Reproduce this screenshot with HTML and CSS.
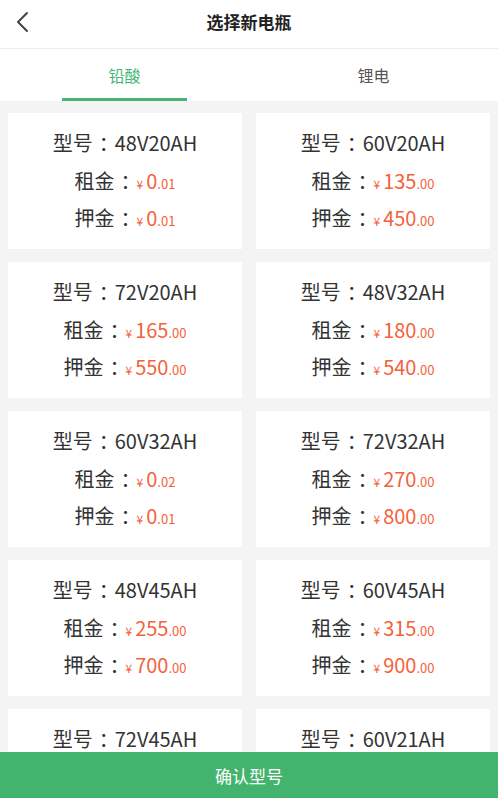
FILE: index.html
```html
<!DOCTYPE html>
<html lang="zh">
<head>
<meta charset="utf-8">
<title>选择新电瓶</title>
<link rel="stylesheet" href="styles.css">
</head>
<body>
<div class="page">
  <header class="topbar">
    <span class="back">
      <svg width="14" height="22" viewBox="0 0 14 22"><path d="M12 2 L3 11 L12 20" fill="none" stroke="#444" stroke-width="2" stroke-linecap="round" stroke-linejoin="round"/></svg>
    </span>
    <h1 class="title">选择新电瓶</h1>
  </header>
  <nav class="tabs">
    <div class="tab active"><span>铅酸</span></div>
    <div class="tab"><span>锂电</span></div>
  </nav>
  <main class="list">
    <div class="grid">
      <div class="card"><p>型号<b>：</b>48V20AH</p><p>租金<b>：</b><span class="price"><i>¥</i>0<em>.01</em></span></p><p>押金<b>：</b><span class="price"><i>¥</i>0<em>.01</em></span></p></div>
      <div class="card"><p>型号<b>：</b>60V20AH</p><p>租金<b>：</b><span class="price"><i>¥</i>135<em>.00</em></span></p><p>押金<b>：</b><span class="price"><i>¥</i>450<em>.00</em></span></p></div>
      <div class="card"><p>型号<b>：</b>72V20AH</p><p>租金<b>：</b><span class="price"><i>¥</i>165<em>.00</em></span></p><p>押金<b>：</b><span class="price"><i>¥</i>550<em>.00</em></span></p></div>
      <div class="card"><p>型号<b>：</b>48V32AH</p><p>租金<b>：</b><span class="price"><i>¥</i>180<em>.00</em></span></p><p>押金<b>：</b><span class="price"><i>¥</i>540<em>.00</em></span></p></div>
      <div class="card"><p>型号<b>：</b>60V32AH</p><p>租金<b>：</b><span class="price"><i>¥</i>0<em>.02</em></span></p><p>押金<b>：</b><span class="price"><i>¥</i>0<em>.01</em></span></p></div>
      <div class="card"><p>型号<b>：</b>72V32AH</p><p>租金<b>：</b><span class="price"><i>¥</i>270<em>.00</em></span></p><p>押金<b>：</b><span class="price"><i>¥</i>800<em>.00</em></span></p></div>
      <div class="card"><p>型号<b>：</b>48V45AH</p><p>租金<b>：</b><span class="price"><i>¥</i>255<em>.00</em></span></p><p>押金<b>：</b><span class="price"><i>¥</i>700<em>.00</em></span></p></div>
      <div class="card"><p>型号<b>：</b>60V45AH</p><p>租金<b>：</b><span class="price"><i>¥</i>315<em>.00</em></span></p><p>押金<b>：</b><span class="price"><i>¥</i>900<em>.00</em></span></p></div>
      <div class="card"><p>型号<b>：</b>72V45AH</p></div>
      <div class="card"><p>型号<b>：</b>60V21AH</p></div>
    </div>
  </main>
  <button class="confirm">确认型号</button>
</div>
</body>
</html>
```
FILE: styles.css
```css
* { box-sizing: border-box; }
html, body { margin: 0; padding: 0; }
body {
  font-family: "Noto Sans CJK SC", "Noto Sans", sans-serif;
  background: #f4f4f4;
  color: #333;
}
.page {
  width: 498px;
  height: 798px;
  display: flex;
  flex-direction: column;
  overflow: hidden;
}
.topbar {
  height: 49px;
  flex: none;
  background: #fff;
  border-bottom: 1px solid #ececec;
  display: flex;
  align-items: center;
  justify-content: center;
  position: relative;
}
.back {
  position: absolute;
  left: 15px;
  top: 11px;
  display: flex;
}
.title {
  margin: 0;
  font-size: 17px;
  font-weight: 700;
  color: #222;
  line-height: 1;
  margin-top: -5px;
}
.tabs {
  display: flex;
  flex: none;
  background: #fff;
  height: 52px;
}
.tab {
  flex: 1;
  display: flex;
  justify-content: center;
  align-items: center;
  font-size: 16px;
  color: #555;
  position: relative;
  padding-bottom: 1px;
}
.tab.active { color: #45b676; }
.tab.active::after {
  content: "";
  position: absolute;
  left: 62px;
  right: 62px;
  bottom: 0;
  height: 3px;
  background: #45b676;
}
.list {
  flex: 1;
  overflow: hidden;
}
.grid {
  display: grid;
  grid-template-columns: 1fr 1fr;
  column-gap: 14px;
  row-gap: 13px;
  padding: 12px 8px 0;
}
.card {
  background: #fff;
  height: 136px;
  display: flex;
  flex-direction: column;
  justify-content: flex-start;
  align-items: center;
  padding-top: 11px;
}
.card p {
  margin: 0;
  font-size: 20px;
  line-height: 37.5px;
  height: 37.5px;
  color: #333;
  white-space: nowrap;
}
.card p b {
  font-weight: 400;
  font-feature-settings: "palt";
  margin: 0 6px;
}
.price {
  color: #f4623c;
  font-size: 20px;
  line-height: 1;
}
.price i {
  font-style: normal;
  font-size: 12px;
  margin-right: 3px;
  line-height: 1;
}
.price em {
  font-style: normal;
  font-size: 13px;
  line-height: 1;
}
.confirm {
  flex: none;
  display: block;
  width: 498px;
  height: 46px;
  border: 0;
  margin: 0;
  background: #42b46d;
  color: #fff;
  font-family: "Noto Sans CJK SC", sans-serif;
  font-size: 17px;
  padding: 0;
}
```
